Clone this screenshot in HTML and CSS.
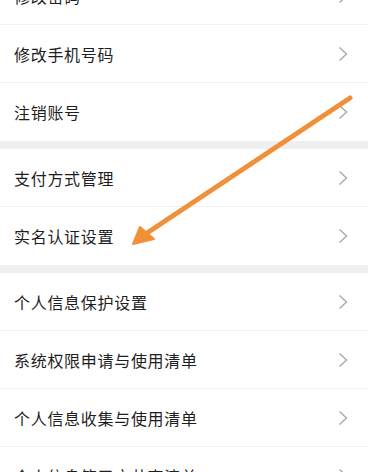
FILE: index.html
```html
<!DOCTYPE html>
<html>
<head>
    <meta charset="utf-8">
    <title>账号与安全</title>

    <link rel="stylesheet" href="styles.css">
</head>
<body>
    <div class="settings">
        <div class="group first">
            <div class="row"><span class="label">修改密码</span><svg class="chevron" viewBox="0 0 10 16"><polyline points="1.5,1.5 8.5,8 1.5,14.5"/></svg></div>
            <div class="row"><span class="label">修改手机号码</span><svg class="chevron" viewBox="0 0 10 16"><polyline points="1.5,1.5 8.5,8 1.5,14.5"/></svg></div>
            <div class="row"><span class="label">注销账号</span><svg class="chevron" viewBox="0 0 10 16"><polyline points="1.5,1.5 8.5,8 1.5,14.5"/></svg></div>
        </div>

        <div class="group">
            <div class="row"><span class="label">支付方式管理</span><svg class="chevron" viewBox="0 0 10 16"><polyline points="1.5,1.5 8.5,8 1.5,14.5"/></svg></div>
            <div class="row"><span class="label">实名认证设置</span><svg class="chevron" viewBox="0 0 10 16"><polyline points="1.5,1.5 8.5,8 1.5,14.5"/></svg></div>
        </div>

        <div class="group">
            <div class="row"><span class="label">个人信息保护设置</span><svg class="chevron" viewBox="0 0 10 16"><polyline points="1.5,1.5 8.5,8 1.5,14.5"/></svg></div>
            <div class="row"><span class="label">系统权限申请与使用清单</span><svg class="chevron" viewBox="0 0 10 16"><polyline points="1.5,1.5 8.5,8 1.5,14.5"/></svg></div>
            <div class="row"><span class="label">个人信息收集与使用清单</span><svg class="chevron" viewBox="0 0 10 16"><polyline points="1.5,1.5 8.5,8 1.5,14.5"/></svg></div>
            <div class="row"><span class="label">个人信息第三方共享清单</span><svg class="chevron" viewBox="0 0 10 16"><polyline points="1.5,1.5 8.5,8 1.5,14.5"/></svg></div>
        </div>
    </div>

    <!-- annotation arrow drawn over the list -->
    <svg class="pointer" viewBox="0 0 368 472">
        <line x1="350" y1="98" x2="144" y2="235"/>
        <polygon points="133,244 140,227 154,239"/>
    </svg>
</body>
</html>
```

FILE: styles.css
```css
html, body {
    margin: 0;
    padding: 0;
}

body {
    width: 368px;
    height: 472px;
    overflow: hidden;
    position: relative;
    background: #efefef;
    font-family: "Noto Sans CJK SC", sans-serif;
}

.group {
    background: #fff;
    margin-top: 8px;
}

.group.first {
    margin-top: -33px;
}

.row {
    height: 58px;
    box-sizing: border-box;
    display: flex;
    align-items: center;
    justify-content: space-between;
    padding: 0 20px 0 14px;
    border-bottom: 1px solid #f1f1f1;
}

.row:last-child {
    border-bottom: none;
}

.label {
    font-size: 16px;
    letter-spacing: 0.7px;
    color: #1e1e1e;
}

.chevron {
    width: 10px;
    height: 16px;
    fill: none;
    stroke: #acacac;
    stroke-width: 1.5;
}

.pointer {
    position: absolute;
    left: 0;
    top: 0;
    width: 368px;
    height: 472px;
    pointer-events: none;
}

.pointer line {
    stroke: #f0913a;
    stroke-width: 5;
    stroke-linecap: round;
}

.pointer polygon {
    fill: #f0913a;
    stroke: #f0913a;
    stroke-width: 2;
    stroke-linejoin: round;
}
```
